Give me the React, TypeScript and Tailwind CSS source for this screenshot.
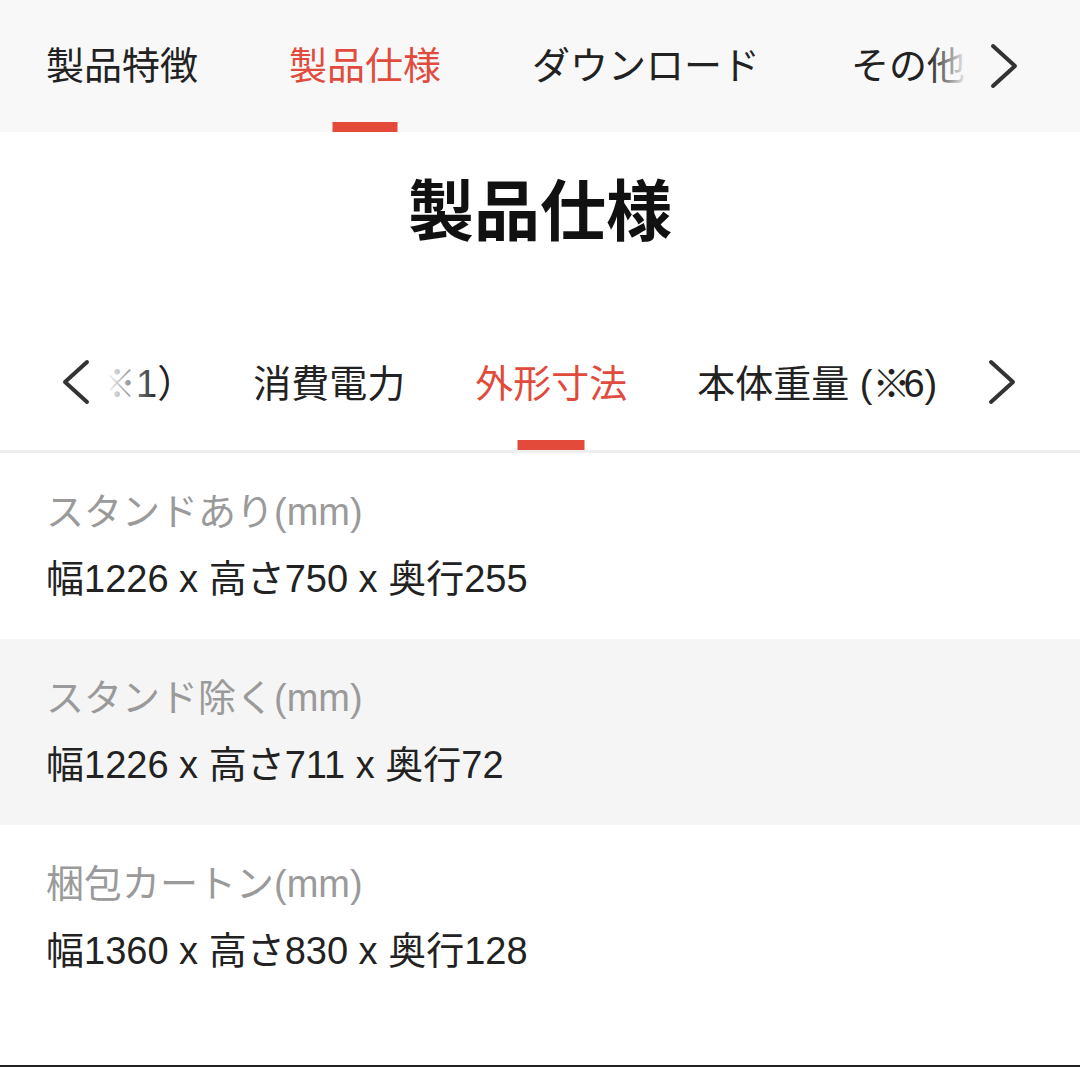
import React from "react";

const FONT = { fontFamily: '"Liberation Sans", "Noto Sans CJK JP", sans-serif' };

const topTabs = ["製品特徴", "製品仕様", "ダウンロード", "その他"];

const rows = [
  { label: "スタンドあり(mm)", value: "幅1226 x 高さ750 x 奥行255", shaded: false },
  { label: "スタンド除く(mm)", value: "幅1226 x 高さ711 x 奥行72", shaded: true },
  { label: "梱包カートン(mm)", value: "幅1360 x 高さ830 x 奥行128", shaded: false },
];

function Chevron({ dir }: { dir: "left" | "right" }) {
  return (
    <svg width="32" height="46" viewBox="0 0 32 46" fill="none">
      <polyline
        points={dir === "right" ? "5,3 27,23 5,43" : "27,3 5,23 27,43"}
        stroke="#333"
        strokeWidth="4"
        strokeLinecap="round"
        strokeLinejoin="round"
      />
    </svg>
  );
}

export default function App() {
  return (
    <div className="flex h-[1067px] w-[1080px] flex-col bg-white text-[#222]" style={FONT}>
      {/* Top nav */}
      <div className="flex h-[132px] items-stretch bg-[#f8f8f8]">
        <div className="relative flex w-[968px] gap-[91px] overflow-hidden pl-[46px]">
          {topTabs.map((t, i) => (
            <div key={t} className="relative flex shrink-0 items-center">
              <span className={`text-[38px] leading-none ${i === 1 ? "text-[#e04b3d]" : "text-[#222]"}`}>{t}</span>
              {i === 1 && (
                <div className="absolute bottom-0 left-1/2 h-[10px] w-[65px] -translate-x-1/2 bg-[#e44a3a]" />
              )}
            </div>
          ))}
          <div className="absolute right-0 top-0 h-full w-[40px] bg-gradient-to-r from-transparent to-[#f8f8f8]" />
        </div>
        <div className="flex flex-1 items-center pl-[20px]">
          <Chevron dir="right" />
        </div>
      </div>

      {/* Title */}
      <div className="flex h-[198px] justify-center pt-[48px]">
        <h1 className="text-[66px] font-bold leading-[64px] text-[#111]">製品仕様</h1>
      </div>

      {/* Sub tabs */}
      <div className="flex h-[123px] items-stretch border-b-[3px] border-[#eeeeee]">
        <div className="flex w-[110px] items-start justify-start pl-[60px] pt-[29px]">
          <Chevron dir="left" />
        </div>
        <div className="relative flex flex-1 overflow-hidden">
          <div className="relative -ml-[12px] mr-[58px] flex shrink-0 items-start pt-[32px]">
            <span className="text-[38px] leading-[44px] text-[#222]">※1）</span>
          </div>
          <div className="relative mr-[70px] flex shrink-0 items-start pt-[32px]">
            <span className="text-[38px] leading-[44px] text-[#222]">消費電力</span>
          </div>
          <div className="relative mr-[70px] flex shrink-0 items-start pt-[32px]">
            <span className="text-[38px] leading-[44px] text-[#e04b3d]">外形寸法</span>
            <div className="absolute bottom-0 left-1/2 h-[10px] w-[67px] -translate-x-1/2 bg-[#e44a3a]" />
          </div>
          <div className="relative flex shrink-0 items-start pt-[32px]">
            <span className="text-[38px] leading-[44px] text-[#222]">
              本体重量 (<span className="tracking-[-7px]">※</span>6)
            </span>
          </div>
          <div className="absolute left-0 top-0 h-full w-[48px] bg-gradient-to-r from-white/90 to-transparent" />
        </div>
        <div className="flex w-[100px] items-start justify-start pl-[6px] pt-[29px]">
          <Chevron dir="right" />
        </div>
      </div>

      {/* Rows */}
      {rows.map((r) => (
        <div key={r.label} className={`flex flex-col px-[46px] pb-[38px] pt-[37px] ${r.shaded ? "bg-[#f5f5f5]" : "bg-white"}`}>
          <div className="text-[38px] leading-[44px] text-[#9a9a9a]">{r.label}</div>
          <div className="mt-[23px] text-[38px] leading-[44px] text-[#222]">{r.value}</div>
        </div>
      ))}

      <div className="flex-1" />
      <div className="h-[2px] bg-[#222]" />
    </div>
  );
}
